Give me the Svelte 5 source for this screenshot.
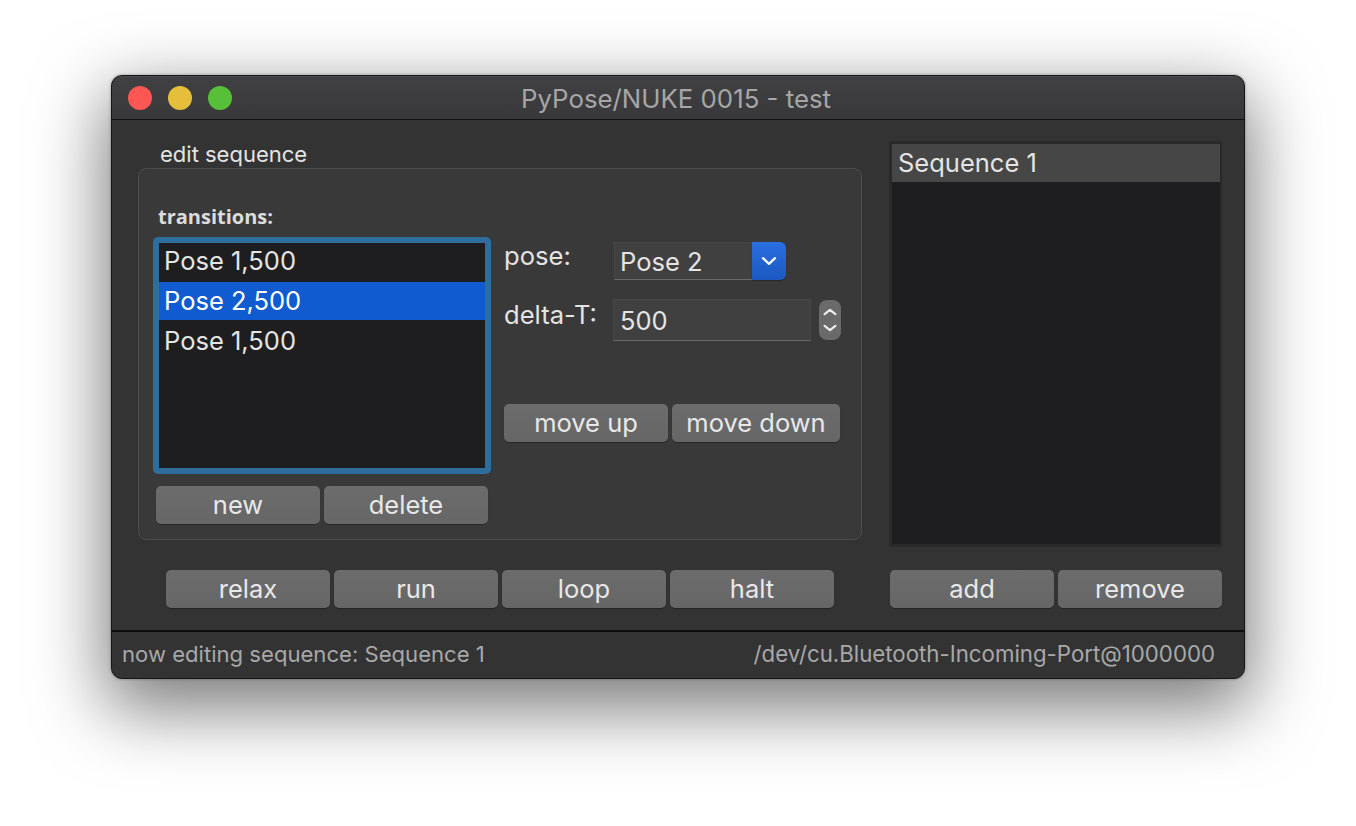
<script>
	const transitions = [
		{ id: 1, text: 'Pose 1,500' },
		{ id: 2, text: 'Pose 2,500', selected: true },
		{ id: 3, text: 'Pose 1,500' }
	];
	const actions = ['relax', 'run', 'loop', 'halt'];
</script>

<div class="page">
	<div class="window">
		<header class="titlebar">
			<div class="lights">
				<span class="light red"></span>
				<span class="light yellow"></span>
				<span class="light green"></span>
			</div>
			<div class="title">PyPose/NUKE 0015 - test</div>
		</header>

		<div class="content">
			<div class="left">
				<div class="group-label">edit sequence</div>
				<section class="group">
					<div class="list-col">
						<div class="heading">transitions:</div>
						<div class="focus-ring">
							<ul class="list">
								{#each transitions as t (t.id)}
									<li class:selected={t.selected}>{t.text}</li>
								{/each}
							</ul>
						</div>
						<div class="btn-row">
							<button>new</button>
							<button>delete</button>
						</div>
					</div>

					<div class="form-col">
						<div class="field pose-field">
							<span class="field-label">pose:</span>
							<div class="combo">
								<span class="combo-value">Pose 2</span>
								<span class="combo-arrow">
									<svg width="16" height="10" viewBox="0 0 16 10">
										<path d="M2 2.2 L8 7.8 L14 2.2" fill="none" stroke="#f2f6fd" stroke-width="2.4" stroke-linecap="round" stroke-linejoin="round" />
									</svg>
								</span>
							</div>
						</div>
						<div class="field delta-field">
							<span class="field-label">delta-T:</span>
							<div class="text-input">500</div>
							<div class="stepper">
								<svg width="14" height="8" viewBox="0 0 14 8">
									<path d="M1.6 6.2 L7 1.8 L12.4 6.2" fill="none" stroke="#ececec" stroke-width="2.2" stroke-linecap="round" stroke-linejoin="round" />
								</svg>
								<svg width="14" height="8" viewBox="0 0 14 8">
									<path d="M1.6 1.8 L7 6.2 L12.4 1.8" fill="none" stroke="#ececec" stroke-width="2.2" stroke-linecap="round" stroke-linejoin="round" />
								</svg>
							</div>
						</div>
						<div class="btn-row move-row">
							<button>move up</button>
							<button class="move-down">move down</button>
						</div>
					</div>
				</section>

				<div class="btn-row actions">
					{#each actions as a}
						<button>{a}</button>
					{/each}
				</div>
			</div>

			<aside class="right">
				<ul class="seq-list">
					<li>Sequence 1</li>
				</ul>
				<div class="btn-row seq-buttons">
					<button>add</button>
					<button>remove</button>
				</div>
			</aside>
		</div>

		<footer class="statusbar">
			<span>now editing sequence: Sequence 1</span>
			<span>/dev/cu.Bluetooth-Incoming-Port@1000000</span>
		</footer>
	</div>
</div>

<style>
	:global(body) {
		margin: 0;
		background: #fff;
	}

	.page {
		box-sizing: border-box;
		width: 1356px;
		height: 826px;
		padding: 75px 0 0 111px;
		overflow: hidden;
		background: #fff;
		font-family: Inter, 'Liberation Sans', sans-serif;
		color: #e4e4e4;
	}

	.window {
		box-sizing: border-box;
		width: 1134px;
		height: 604px;
		display: flex;
		flex-direction: column;
		background: #333334;
		border: 1px solid #161616;
		border-radius: 11px;
		overflow: hidden;
		box-shadow:
			0 24px 70px 6px rgba(0, 0, 0, 0.52),
			0 0 3px rgba(0, 0, 0, 0.35);
	}

	.titlebar {
		flex: none;
		height: 44px;
		box-sizing: border-box;
		display: grid;
		grid-template-columns: 1fr auto 1fr;
		align-items: center;
		background: linear-gradient(#414143, #38383a);
		border-bottom: 1px solid #111;
		box-shadow: inset 0 1px 0 #4c4c4c;
	}

	.lights {
		display: flex;
		gap: 16px;
		padding-left: 16px;
	}

	.light {
		width: 24px;
		height: 24px;
		border-radius: 50%;
	}

	.red {
		background: #fc5753;
	}

	.yellow {
		background: #e5bf3c;
	}

	.green {
		background: #57c038;
	}

	.title {
		grid-column: 2;
		font-size: 25.8px;
		line-height: 32px;
		padding: 2px 4px 0 0;
		color: #a6a6a6;
	}

	.content {
		flex: 1;
		display: flex;
		min-height: 0;
		padding: 21px 22px 0 26px;
		justify-content: space-between;
	}

	.left {
		width: 724px;
	}

	.group-label {
		height: 27px;
		padding-left: 22px;
		font-size: 22px;
		line-height: 26px;
	}

	.group {
		box-sizing: border-box;
		height: 372px;
		display: flex;
		gap: 13px;
		padding: 37px 20px 14px 14px;
		background: #393939;
		border: 1px solid #4c4c4c;
		border-radius: 8px;
	}

	.list-col {
		width: 338px;
	}

	.heading {
		height: 31px;
		padding-left: 5px;
		font-family: 'Open Sans', sans-serif;
		font-weight: 700;
		font-size: 20px;
		line-height: 22px;
		color: #dcdcdc;
	}

	.focus-ring {
		box-sizing: border-box;
		height: 237px;
		border: 6px solid #2e6d9c;
		border-radius: 5px;
		background: #1e1e20;
	}

	.list,
	.seq-list {
		list-style: none;
		margin: 0;
		padding: 0;
		font-size: 25.5px;
	}

	.list {
		display: flex;
		flex-direction: column;
		gap: 2px;
		margin-top: -1px;
	}

	.list li {
		height: 38px;
		line-height: 38px;
		padding-left: 5px;
	}

	.list li.selected {
		background: #0f5bcf;
		color: #fff;
	}

	.btn-row {
		display: flex;
		gap: 4px;
	}

	.list-col .btn-row {
		margin: 12px 0 0 3px;
	}

	button {
		box-sizing: border-box;
		width: 164px;
		height: 38px;
		padding: 0;
		border: 0;
		border-radius: 5px;
		background: linear-gradient(#6c6c6c, #666);
		box-shadow: 0 1px 1px rgba(0, 0, 0, 0.3);
		font: inherit;
		font-size: 25.5px;
		line-height: 36px;
		color: #e8e8e8;
	}

	.form-col {
		flex: 1;
		display: flex;
		flex-direction: column;
	}

	.field {
		display: flex;
	}

	.pose-field {
		height: 38px;
		margin-top: 36px;
	}

	.delta-field {
		height: 42px;
		margin-top: 19px;
	}

	.field-label {
		width: 110px;
		flex: none;
		font-size: 25.6px;
		line-height: 27px;
	}

	.delta-field .field-label {
		width: 109px;
		line-height: 32px;
	}

	.combo {
		display: flex;
		width: 172px;
		height: 38px;
	}

	.combo-value {
		flex: 1;
		box-sizing: border-box;
		padding-left: 5px;
		font-size: 25.5px;
		line-height: 37px;
		background: #404041;
		border: 1px solid #474747;
		border-bottom-color: #6a6a6a;
		border-right: 0;
	}

	.combo-arrow {
		width: 34px;
		display: flex;
		align-items: center;
		justify-content: center;
		background: linear-gradient(#2a6fe0, #1c58c0);
		border-radius: 0 6px 6px 0;
		box-shadow: 0 1px 1px rgba(0, 0, 0, 0.3);
	}

	.text-input {
		box-sizing: border-box;
		width: 198px;
		height: 42px;
		padding-left: 6px;
		font-size: 25.5px;
		line-height: 42px;
		background: #404041;
		border: 1px solid #474747;
		border-bottom-color: #6a6a6a;
	}

	.stepper {
		box-sizing: border-box;
		width: 22px;
		height: 40px;
		margin: 1px 0 0 8px;
		display: flex;
		flex-direction: column;
		align-items: center;
		justify-content: center;
		gap: 8px;
		background: #6a6a6a;
		border-radius: 8px;
	}

	.move-row {
		margin-top: 63px;
	}

	.move-down {
		width: 168px;
	}

	.actions {
		margin: 30px 0 0 28px;
	}

	.right {
		width: 333px;
	}

	.seq-list {
		box-sizing: border-box;
		height: 406px;
		background: #1e1e20;
		border: 3px solid #2a2a2b;
		border-right-width: 2px;
	}

	.seq-list li {
		height: 38px;
		line-height: 38px;
		padding-left: 6px;
		background: #464646;
	}

	.seq-buttons {
		margin: 23px 0 0 1px;
	}

	.statusbar {
		flex: none;
		height: 48px;
		display: flex;
		justify-content: space-between;
		box-sizing: border-box;
		padding: 9px 29px 0 10px;
		border-top: 2px solid #0c0c0c;
		background: #333334;
		font-size: 22.1px;
		line-height: 26px;
		color: #a8a8a8;
	}

	.statusbar span:last-child {
		font-size: 22.25px;
	}
</style>
